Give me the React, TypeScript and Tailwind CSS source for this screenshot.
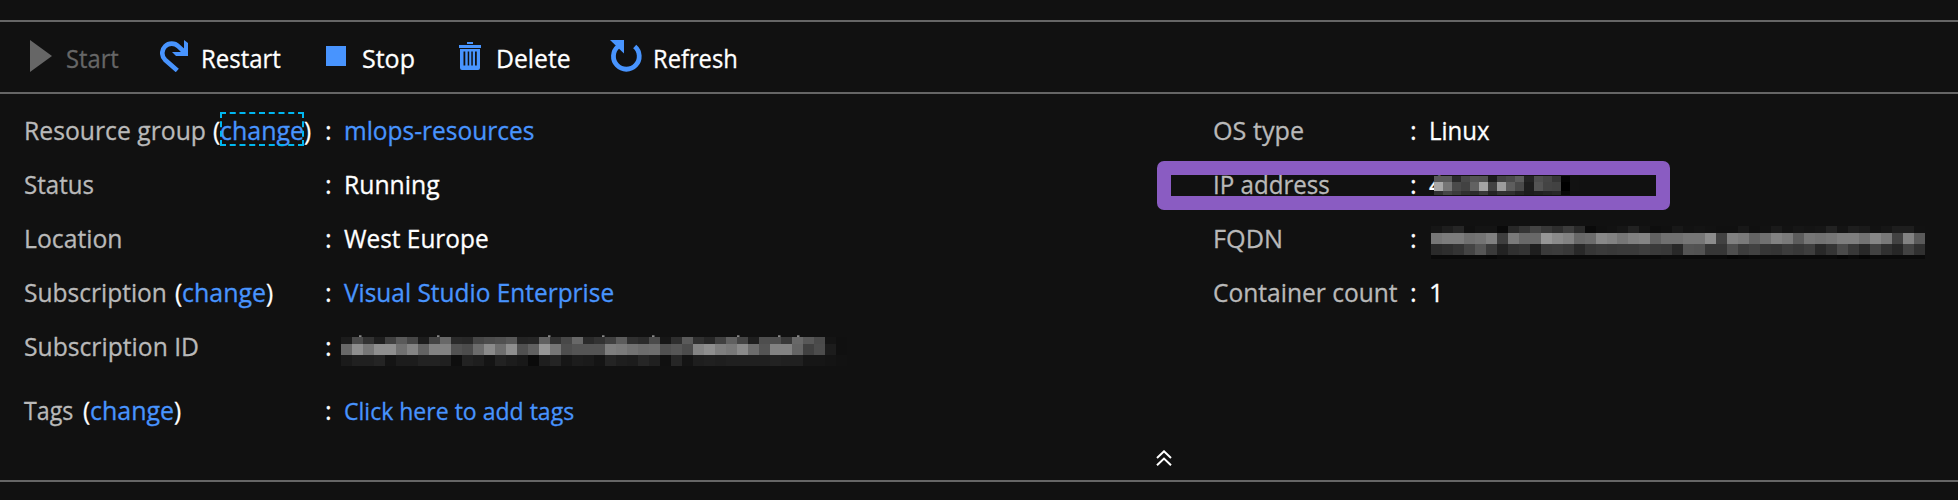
import type { ReactNode } from "react";

const T = ({ c = "", children }: { c?: string; children: ReactNode }) => (
  <span className={`inline-block origin-left whitespace-pre ${c}`}>{children}</span>
);

const SUB_ID = {
  rows: [
    [28,75,50,30,64,90,70,28,68,104,42,40,70,76,80,88,36,38,96,50,72,104,42,50,64,92,48,42,74,22,46,90,48,38,64,96,68,30,78,78,56,104,88,74,20,16],
    [104,142,118,142,142,112,132,98,130,130,82,76,108,138,110,142,80,96,150,118,78,84,84,84,126,122,114,108,110,80,86,76,132,142,126,120,138,108,84,130,130,100,64,76,28,16],
    [26,32,32,36,20,28,28,34,34,32,14,34,30,20,34,28,24,10,30,36,22,28,26,20,36,30,28,38,32,16,38,20,30,32,30,32,32,32,32,34,32,32,22,22,20,18],
  ],
};
const IP = {
  rows: [
    [90,90,42,72,84,82,28,66,74,92,36,78,70,54,4,18],
    [168,118,74,66,98,164,66,156,94,74,30,84,68,66,0,18],
    [50,70,60,48,44,58,36,50,48,36,28,32,36,40,8,17],
  ],
};
const FQDN = {
  rows: [
    [22,30,38,16,20,20,10,40,52,68,56,46,60,42,10,16,18,22,34,20,14,16,24,18,20,18,16,16,24,16,18,26,18,22,20,22,34,20,30,26,18,22,30,30,18],
    [118,124,124,112,116,128,62,122,104,104,150,138,130,104,108,136,130,118,128,132,98,112,112,118,118,140,66,128,122,100,112,130,122,92,118,114,118,126,126,114,134,120,66,130,90],
    [42,46,52,68,86,58,34,48,52,30,58,60,56,40,54,58,56,58,58,62,58,56,40,84,82,54,54,78,60,66,54,52,60,56,62,40,52,74,56,40,66,48,38,66,48],
    [10,10,10,10,10,8,12,12,12,12,10,10,10,10,10,10,10,10,10,10,10,12,12,10,10,10,10,6,8,10,10,10,10,10,10,10,10,6,10,6,10,10,10,10,10],
  ],
};

function Mosaic({ rows, cell, heights }: { rows: number[][]; cell: string; heights: string[] }) {
  return (
    <div className="flex flex-col">
      {rows.map((r, i) => (
        <div key={i} className={`flex ${heights[i]}`}>
          {r.map((g, j) => (
            <div key={j} className={`h-full shrink-0 ${cell}`} style={{ backgroundColor: `rgb(${g},${g},${g})` }} />
          ))}
        </div>
      ))}
    </div>
  );
}

const Row = ({ label, children, w, c = "" }: { label: ReactNode; children: ReactNode; w: string; c?: string }) => (
  <div className={`flex h-[54px] items-center ${c}`}>
    <div className={`flex shrink-0 text-[#b9b9b9] ${w}`}>{label}</div>
    <div className="w-[19px] shrink-0">:</div>
    {children}
  </div>
);

const Change = ({ focused = false }: { focused?: boolean }) => (
  <span className="flex text-white">
    <span className="w-[7px]"><T c="scale-x-[0.95]">(</T></span>
    <span className="relative w-[84px] text-[#4894fe]">
      <T c="scale-x-[0.98]">change</T>
      {focused && <span className="absolute -top-px left-0 h-[34px] w-[84px] border-2 border-dashed border-[#00b7f0]" />}
    </span>
    <T c="scale-x-[0.95]">)</T>
  </span>
);

const TICKS = [359, 437, 548, 602, 652, 737, 778, 797];

export default function App() {
  return (
    <div className="flex h-[500px] w-[1958px] flex-col overflow-hidden bg-[#111] pt-5 font-['Open_Sans',sans-serif] text-[25.5px] leading-[35px] text-white [-webkit-text-stroke:0.3px]">
      <div className="flex h-[74px] shrink-0 border-y-2 border-[#666] pt-[18px] pl-[30px]">
        <div className="flex w-[130px] text-[#666]">
          <svg className="h-8 w-9 shrink-0" viewBox="0 0 36 32"><path d="M0 0L22 16L0 32Z" fill="#666" /></svg>
          <T c="mt-px scale-x-[0.93]">Start</T>
        </div>
        <div className="flex w-[166px]">
          <svg className="h-8 w-[41px] shrink-0" viewBox="0 0 41 32">
            <path d="M17.300 30.500L5 19.700A9.400 9.400 0 0 1 18.400 6.400L25 12.500" fill="none" stroke="#4894fe" strokeWidth="4.600" />
            <path d="M24 0L28 3V16H16L12 12H20L24 10Z" fill="#4894fe" />
          </svg>
          <T c="mt-px scale-x-[0.94]">Restart</T>
        </div>
        <div className="flex w-[133px]">
          <svg className="h-8 w-9 shrink-0" viewBox="0 0 36 32"><path d="M0 6H20V26H0Z" fill="#4894fe" /></svg>
          <T c="mt-px scale-x-[0.98]">Stop</T>
        </div>
        <div className="flex w-[151px]">
          <svg className="h-8 w-[37px] shrink-0" viewBox="0 0 37 32" fill="#4894fe">
            <path d="M8 2H14V4H8ZM0 5H22V8H0Z" />
            <path fillRule="evenodd" d="M1 9H21V28Q21 30 19 30H3Q1 30 1 28ZM4.500 11.500V25.500H6.300V11.500ZM8.700 11.500V25.500H10.200V11.500ZM12.300 11.500V25.500H13.800V11.500ZM16 11.500V25.500H17.800V11.500Z" />
          </svg>
          <T c="mt-px scale-x-[0.97]">Delete</T>
        </div>
        <div className="flex">
          <svg className="h-8 w-[43px] shrink-0" viewBox="0 0 43 32">
            <path d="M8 6.500A12.900 12.900 0 1 0 24.700 6.500" fill="none" stroke="#4894fe" strokeWidth="4.800" />
            <path d="M0 0H14V13.500Z" fill="#4894fe" />
          </svg>
          <T c="mt-px scale-x-[0.93]">Refresh</T>
        </div>
      </div>

      <div className="relative flex h-[388px] shrink-0 border-b-2 border-[#666] pt-[9px] pl-6">
        <div className="w-[1189px]">
          <Row w="w-[301px]" label={<><span className="w-[189px]"><T c="scale-x-[0.97]">Resource group</T></span><Change focused /></>}>
            <T c="scale-x-[0.96] text-[#4894fe]">mlops-resources</T>
          </Row>
          <Row w="w-[301px]" label={<T c="scale-x-[0.944]">Status</T>}><T c="scale-x-[0.97]">Running</T></Row>
          <Row w="w-[301px]" label={<T c="scale-x-[0.97]">Location</T>}><T c="scale-x-[0.956]">West Europe</T></Row>
          <Row w="w-[301px]" label={<><span className="w-[151px]"><T c="scale-x-[0.962]">Subscription</T></span><Change /></>}>
            <T c="scale-x-[0.958] text-[#4894fe]">Visual Studio Enterprise</T>
          </Row>
          <Row w="w-[301px]" label={<T c="scale-x-[0.968]">Subscription ID</T>}>
            <div className="-ml-[3px] pt-[11px]"><Mosaic {...SUB_ID} cell="w-[11px]" heights={["h-[7.500px]", "h-[11px]", "h-[11px]"]} /></div>
          </Row>
          <Row c="mt-[10px]" w="w-[301px]" label={<><span className="w-[59px]"><T c="scale-x-[0.91]">Tags</T></span><Change /></>}>
            <T c="scale-x-[0.94] text-[24.5px] text-[#4894fe]">Click here to add tags</T>
          </Row>
        </div>
        <div>
          <Row w="w-[197px]" label={<T c="scale-x-[0.987]">OS type</T>}><T c="scale-x-[0.94]">Linux</T></Row>
          <Row w="w-[197px]" label={<T c="scale-x-[0.946]">IP address</T>}>
            <div className="relative">
              <T>4</T>
              <div className="absolute top-[9px] left-[5px]"><Mosaic {...IP} cell="w-[9.050px]" heights={["h-[6px]", "h-[9px]", "h-[4px]"]} /></div>
            </div>
          </Row>
          <Row w="w-[197px]" label={<T c="scale-x-[0.99]">FQDN</T>}>
            <div className="pt-[9px] pl-[2px]"><Mosaic {...FQDN} cell="w-[10.980px]" heights={["h-[7.500px]", "h-[11px]", "h-[11px]", "h-[4px]"]} /></div>
          </Row>
          <Row w="w-[197px]" label={<T c="scale-x-[0.963]">Container count</T>}><T>1</T></Row>
        </div>

        <svg className="absolute top-[241px] left-0 h-[3px] w-[1000px]" viewBox="0 0 1000 3">
          {TICKS.map((x) => <rect key={x} x={x} y="0.500" width="2.500" height="1.200" fill="#bbb" />)}
        </svg>
        <div className="absolute top-[67px] left-[1157px] h-[49px] w-[513px] rounded-[7px] bg-[#8a5cc2] [clip-path:polygon(evenodd,0_0,100%_0,100%_100%,0_100%,0_0,14px_14px,499px_14px,499px_35px,14px_35px,14px_14px)]" />
        <svg className="absolute top-[356px] left-[1156px] h-4 w-4" viewBox="0 0 16 16" fill="none" stroke="#fff" strokeWidth="2">
          <path d="M1 8L8 1.300L15 8M1 15.300L8 8.600L15 15.300" />
        </svg>
      </div>
    </div>
  );
}
